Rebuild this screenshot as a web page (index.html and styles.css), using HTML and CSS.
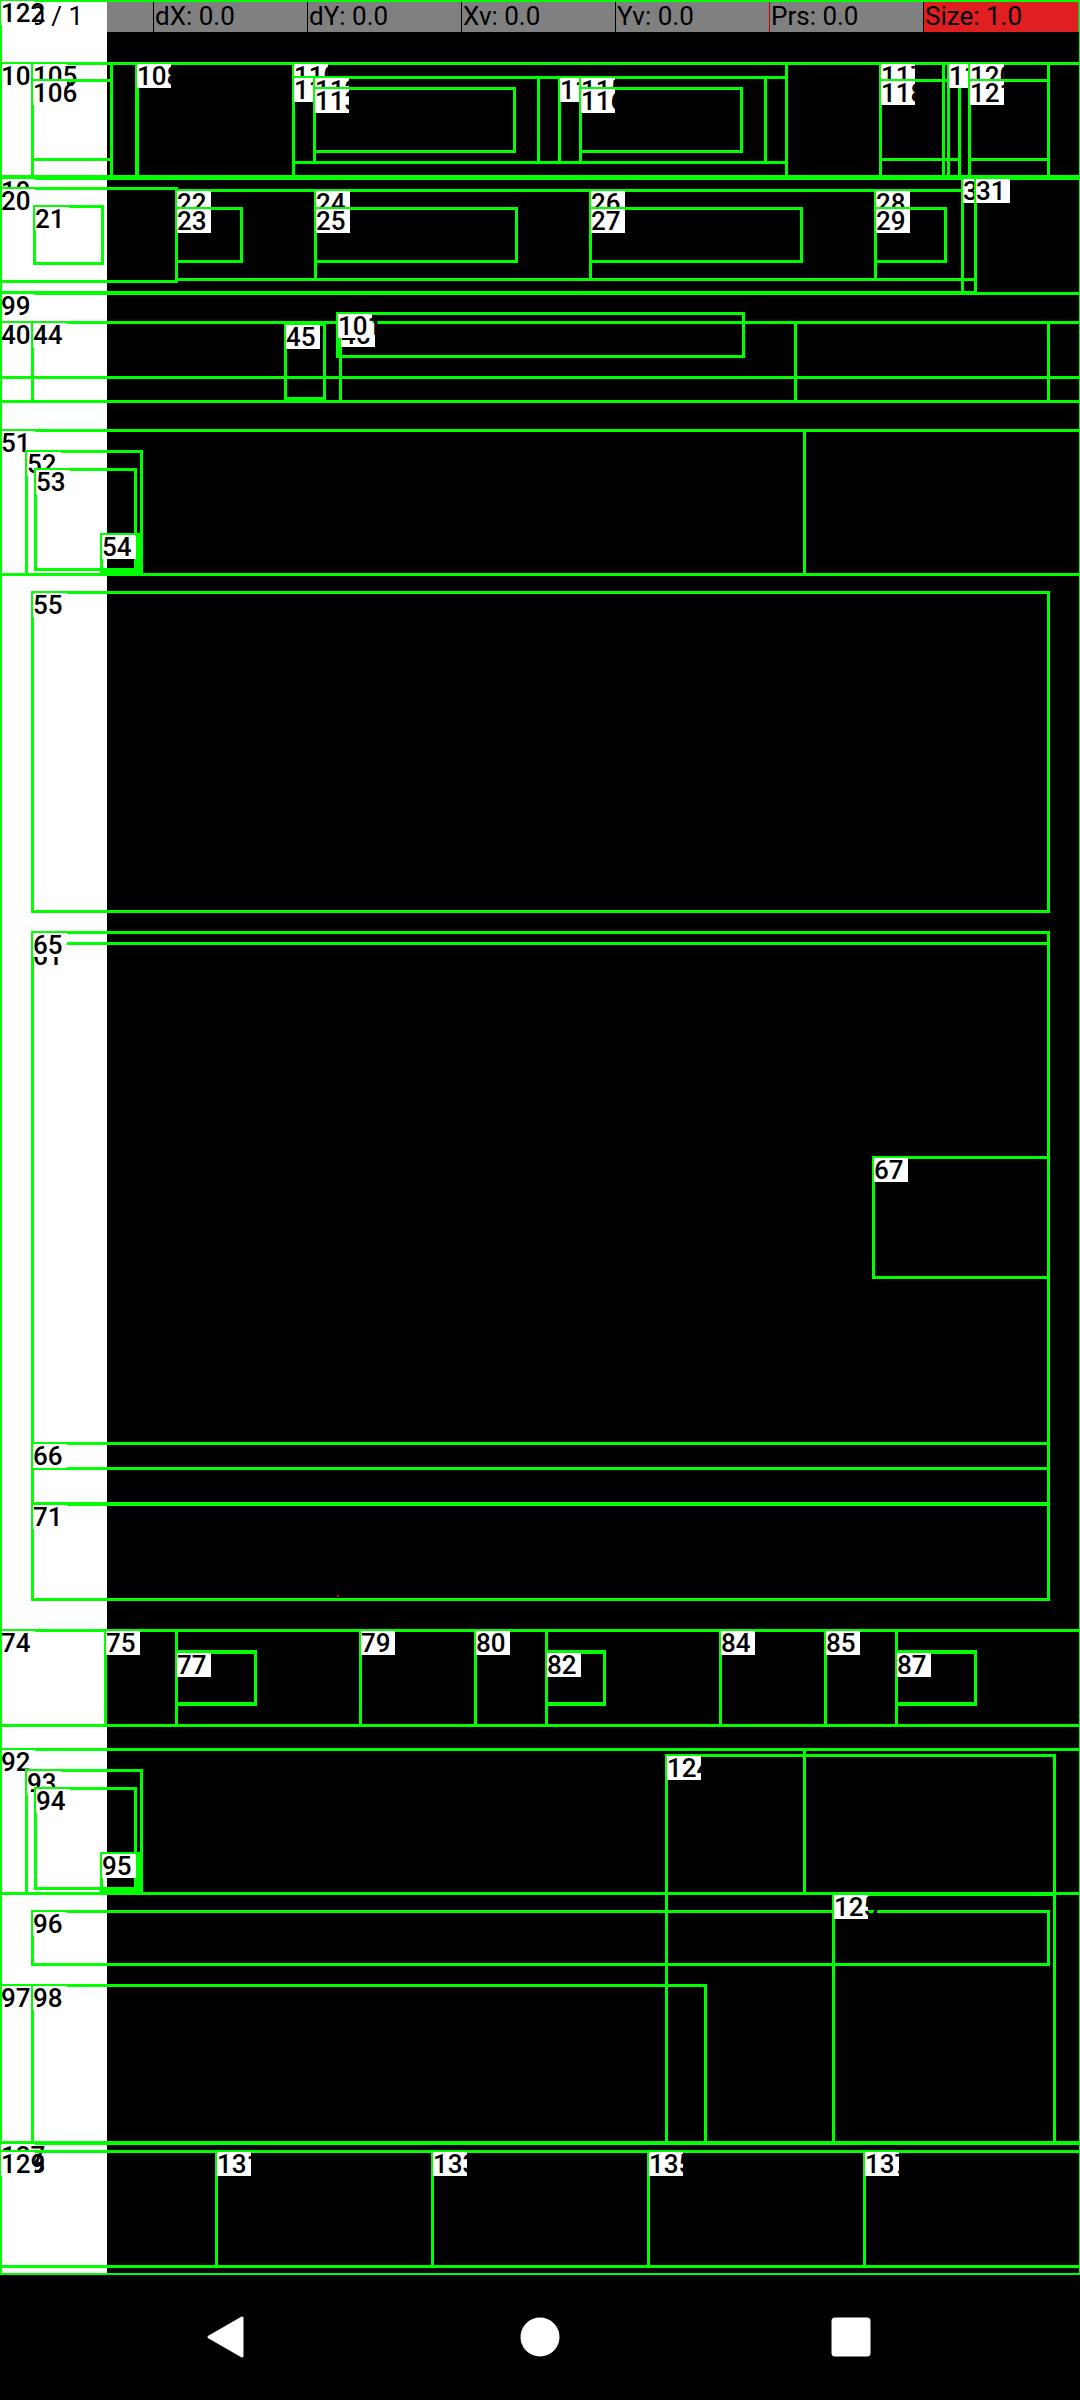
FILE: index.html
```html
<!DOCTYPE html>
<html lang="en">
<head>
<meta charset="utf-8">
<meta name="viewport" content="width=device-width, initial-scale=1">
<title>View bounds</title>
<link rel="stylesheet" href="styles.css">
</head>
<body>
<main class="screen">
  <header class="pointer-bar">
    <span class="cell cell-first">P: 0 / 1</span>
    <span class="cell">dX: 0.0</span>
    <span class="cell">dY: 0.0</span>
    <span class="cell">Xv: 0.0</span>
    <span class="cell cell-mark">Yv: 0.0</span>
    <span class="cell">Prs: 0.0</span>
    <span class="cell cell-size">Size: 1.0</span>
  </header>
  <div class="canvas" id="canvas"></div>
</main>
<nav class="nav-bar" aria-label="System">
  <button class="nav-button" type="button" aria-label="Back">
    <svg class="nav-icon" viewBox="0 0 44 44"><path d="M37 3v38L4 22z"/></svg>
  </button>
  <button class="nav-button" type="button" aria-label="Home">
    <svg class="nav-icon" viewBox="0 0 44 44"><circle cx="22" cy="22" r="18"/></svg>
  </button>
  <button class="nav-button" type="button" aria-label="Recent apps">
    <svg class="nav-icon" viewBox="0 0 44 44"><rect x="2" y="4" width="36" height="36" rx="2"/></svg>
  </button>
</nav>
<script src="boxes.js"></script>
</body>
</html>
```
FILE: styles.css
```css
* {
  box-sizing: border-box;
}

body {
  margin: 0;
  min-height: 100vh;
  display: flex;
  flex-direction: column;
  background: #000;
  color: #000;
  font-family: Roboto, "Liberation Sans", sans-serif;
}

.screen {
  position: relative;
  flex: 1;
  min-height: 2275px;
  overflow: hidden;
  background: linear-gradient(#fff, #fff) left / 107px 100% no-repeat;
}

.pointer-bar {
  display: grid;
  grid-template-columns: repeat(7, 1fr);
  height: 32px;
  padding-right: 2px;
  background: linear-gradient(to right, transparent 107px, #808080 107px);
}

.cell {
  padding-left: 1px;
  border-right: 1px solid #000;
  font-size: 26px;
  line-height: 32px;
  white-space: nowrap;
}

.cell-mark {
  border-right-color: #c00000;
}

.cell-size {
  border-right: 0;
  background: #e02020;
}

.canvas {
  position: absolute;
  inset: 0;
}

/* Bounds are plotted on a 1080-unit wide canvas. */
.box {
  position: absolute;
  left: calc(var(--x) / 1080 * 100%);
  top: calc(var(--y) * 1px);
  width: calc(var(--w) / 1080 * 100% + 3px);
  height: calc(var(--h) * 1px + 3px);
  margin: -1px 0 0 -1px;
  border: 3px solid #0f0;
}

.label {
  display: block;
  width: 34px;
  height: 24px;
  margin: -1px;
  background: #fff;
  font-size: 26px;
  font-weight: 500;
  line-height: 24px;
  white-space: nowrap;
}

.touch {
  position: absolute;
  left: calc(var(--x) / 1080 * 100%);
  top: calc(var(--y) * 1px);
  width: 2px;
  height: 2px;
  background: #f00;
}

.nav-bar {
  display: grid;
  grid-template-columns: repeat(3, 29%);
  justify-content: center;
  height: 125px;
  padding-bottom: 2px;
}

.nav-button {
  display: flex;
  align-items: center;
  justify-content: center;
  padding: 0;
  border: 0;
  background: none;
}

.nav-icon {
  width: 44px;
  height: 44px;
  fill: #fff;
  stroke: #fff;
  stroke-width: 3;
  stroke-linejoin: round;
}
```
FILE: boxes.js
```js
// Each entry: label, left, top, right, bottom. Drawn in order, later on top.
const boxes = [
  ["", 0, 0, 1080, 2274],
  ["", 0, 63, 1080, 2142],
  ["19", 0, 178, 975, 292],
  ["20", 0, 188, 176, 281],
  ["21", 34, 206, 102, 263],
  ["22", 176, 190, 315, 279],
  ["23", 176, 208, 241, 261],
  ["24", 315, 190, 590, 279],
  ["25", 315, 208, 516, 261],
  ["26", 590, 190, 875, 279],
  ["27", 590, 208, 801, 261],
  ["28", 875, 190, 975, 279],
  ["29", 875, 208, 945, 261],
  ["30", 962, 178, 975, 292],
  ["31", 975, 178, 1080, 293],
  ["40", 0, 322, 1080, 401],
  ["44", 32, 322, 1048, 401],
  ["45", 285, 324, 324, 398],
  ["46", 340, 322, 795, 401],
  ["", 0, 430, 804, 574],
  ["51", 0, 430, 1080, 574],
  ["52", 26, 451, 141, 574],
  ["53", 35, 469, 135, 569],
  ["54", 101, 534, 138, 571],
  ["55", 32, 592, 1048, 911],
  ["61", 32, 943, 1048, 1468],
  ["65", 32, 932, 1048, 1443],
  ["66", 32, 1443, 1048, 1503],
  ["67", 873, 1157, 1048, 1277],
  ["71", 32, 1504, 1048, 1599],
  ["74", 0, 1630, 1080, 1725],
  ["75", 105, 1630, 176, 1725],
  ["", 176, 1651, 255, 1704],
  ["77", 176, 1652, 255, 1703],
  ["79", 360, 1630, 475, 1725],
  ["80", 475, 1630, 546, 1725],
  ["", 546, 1651, 604, 1704],
  ["82", 546, 1652, 604, 1703],
  ["84", 720, 1630, 825, 1725],
  ["85", 825, 1630, 896, 1725],
  ["", 896, 1651, 975, 1704],
  ["87", 896, 1652, 975, 1703],
  ["", 0, 1749, 804, 1893],
  ["92", 0, 1749, 1080, 1893],
  ["93", 26, 1770, 141, 1893],
  ["94", 35, 1788, 135, 1888],
  ["95", 101, 1853, 138, 1890],
  ["96", 32, 1911, 1048, 1964],
  ["97", 0, 1985, 705, 2142],
  ["98", 32, 1985, 705, 2142],
  ["99", 0, 293, 1080, 377],
  ["101", 337, 313, 743, 356],
  ["104", 0, 63, 1080, 176],
  ["105", 32, 63, 111, 176],
  ["106", 32, 80, 111, 159],
  ["", 137, 63, 943, 176],
  ["108", 136, 63, 293, 176],
  ["110", 293, 63, 786, 176],
  ["111", 293, 77, 786, 162],
  ["112", 314, 77, 538, 162],
  ["113", 314, 88, 514, 151],
  ["114", 559, 77, 765, 162],
  ["115", 580, 77, 765, 162],
  ["116", 580, 88, 741, 151],
  ["117", 880, 63, 959, 176],
  ["118", 880, 80, 959, 159],
  ["119", 948, 63, 969, 176],
  ["120", 969, 63, 1048, 176],
  ["121", 969, 80, 1048, 159],
  ["122", 0, 0, 1080, 2274],
  ["124", 666, 1755, 1054, 2142],
  ["125", 833, 1894, 1054, 2142],
  ["127", 0, 2143, 1080, 2274],
  ["128", 0, 2151, 1080, 2266],
  ["129", 0, 2151, 216, 2266],
  ["131", 216, 2151, 432, 2266],
  ["133", 432, 2151, 648, 2266],
  ["135", 648, 2151, 864, 2266],
  ["137", 864, 2151, 1080, 2266]
];

const canvas = document.getElementById("canvas");

function place(className, values) {
  const el = document.createElement("div");
  el.className = className;
  for (const [name, value] of Object.entries(values)) {
    el.style.setProperty("--" + name, value);
  }
  canvas.append(el);
  return el;
}

for (const [text, x, y, right, bottom] of boxes) {
  const box = place("box", { x, y, w: right - x, h: bottom - y });
  if (text) {
    const label = document.createElement("span");
    label.className = "label";
    label.textContent = text;
    box.append(label);
  }
}

place("touch", { x: 337, y: 1595 });
```
